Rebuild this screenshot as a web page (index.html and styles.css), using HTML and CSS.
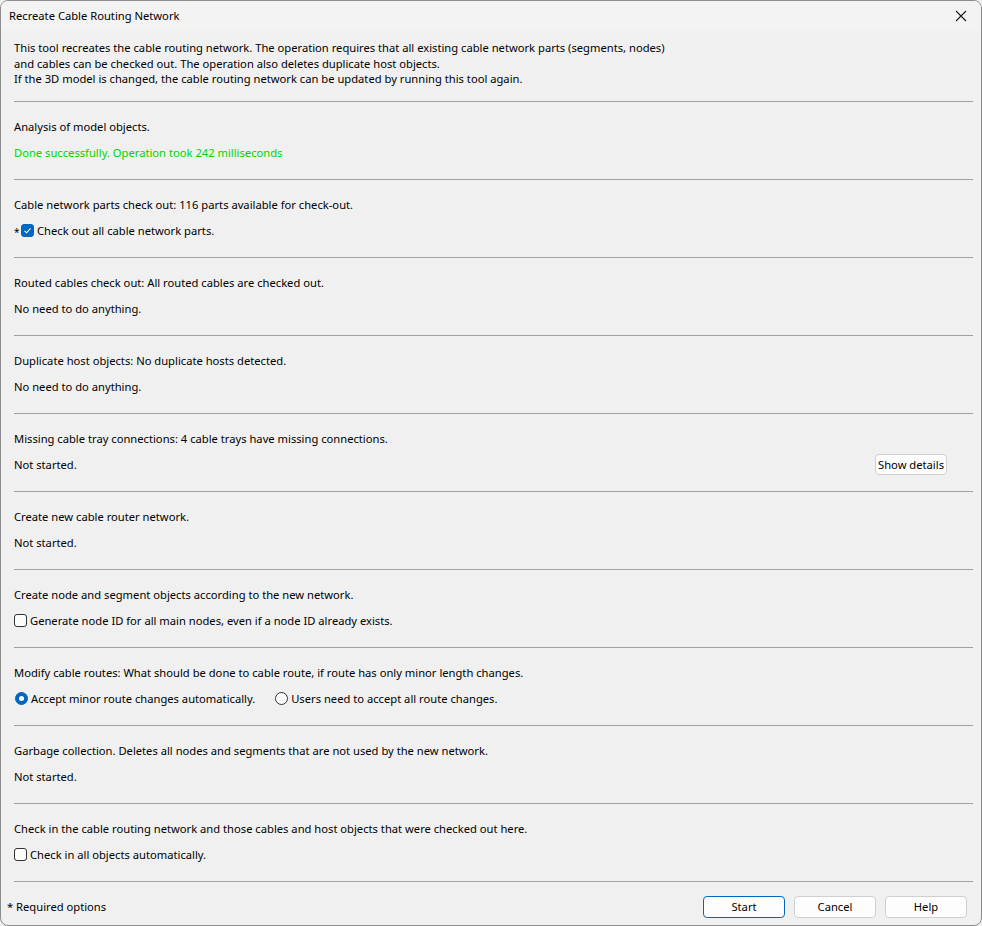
FILE: index.html
```html
<!DOCTYPE html>
<html>
<head>
<meta charset="utf-8">
<link rel="stylesheet" href="styles.css">
</head>
<body>
<div class="window">
  <div class="titlebar">
    <span class="title">Recreate Cable Routing Network</span>
    <svg class="close" width="12" height="12" viewBox="0 0 12 12"><path d="M1 1 L11 11 M11 1 L1 11" stroke="#1a1a1a" stroke-width="1.1" fill="none"/></svg>
  </div>
  <div class="content">
    <div class="intro">
      <div class="line">This tool recreates the cable routing network. The operation requires that all existing cable network parts (segments, nodes)</div>
      <div class="line">and cables can be checked out. The operation also deletes duplicate host objects.</div>
      <div class="line">If the 3D model is changed, the cable routing network can be updated by running this tool again.</div>
    </div>

    <div class="section">
      <div class="row">Analysis of model objects.</div>
      <div class="row green">Done successfully. Operation took 242 milliseconds</div>
    </div>

    <div class="section">
      <div class="row">Cable network parts check out: 116 parts available for check-out.</div>
      <div class="row"><span class="req">*</span><span class="cb checked"><svg width="9" height="9" viewBox="0 0 9 9"><path d="M1.5 4.8 L3.6 6.8 L7.6 2.4" stroke="#fff" stroke-width="1.1" fill="none"/></svg></span><span>Check out all cable network parts.</span></div>
    </div>

    <div class="section">
      <div class="row">Routed cables check out: All routed cables are checked out.</div>
      <div class="row">No need to do anything.</div>
    </div>

    <div class="section">
      <div class="row">Duplicate host objects: No duplicate hosts detected.</div>
      <div class="row">No need to do anything.</div>
    </div>

    <div class="section">
      <div class="row">Missing cable tray connections: 4 cable trays have missing connections.</div>
      <div class="row split"><span>Not started.</span><button class="btn small">Show details</button></div>
    </div>

    <div class="section">
      <div class="row">Create new cable router network.</div>
      <div class="row">Not started.</div>
    </div>

    <div class="section">
      <div class="row">Create node and segment objects according to the new network.</div>
      <div class="row"><span class="cb"></span><span>Generate node ID for all main nodes, even if a node ID already exists.</span></div>
    </div>

    <div class="section">
      <div class="row">Modify cable routes: What should be done to cable route, if route has only minor length changes.</div>
      <div class="row"><span class="rb on"></span><span class="rlabel">Accept minor route changes automatically.</span><span class="rb"></span><span>Users need to accept all route changes.</span></div>
    </div>

    <div class="section">
      <div class="row">Garbage collection. Deletes all nodes and segments that are not used by the new network.</div>
      <div class="row">Not started.</div>
    </div>

    <div class="section">
      <div class="row">Check in the cable routing network and those cables and host objects that were checked out here.</div>
      <div class="row"><span class="cb"></span><span>Check in all objects automatically.</span></div>
    </div>

    <div class="footer">
      <span class="note">* Required options</span>
      <div class="buttons">
        <button class="btn default">Start</button>
        <button class="btn">Cancel</button>
        <button class="btn">Help</button>
      </div>
    </div>
  </div>
</div>
</body>
</html>
```

FILE: styles.css
```css
html, body {
  margin: 0;
  padding: 0;
  background: #f0f0f0;
}
body {
  font-family: "Noto Sans", "Liberation Sans", sans-serif;
  font-size: 11.2px;
  color: #000;
}
.window {
  width: 982px;
  height: 926px;
  box-sizing: border-box;
  border: 1px solid #8c8c8c;
  border-radius: 8px;
  overflow: hidden;
  background: #f0f0f0;
}
.titlebar {
  height: 30px;
  background: #f3f3f3;
  display: flex;
  align-items: center;
  justify-content: space-between;
  padding: 0 14px 0 8px;
}
.title {
  font-size: 11.2px;
  line-height: 16px;
}
.close {
  display: block;
}
.content {
  padding: 0 8px 0 13px;
}
.intro {
  padding-top: 9px;
  padding-bottom: 14px;
  border-bottom: 1px solid #a0a0a0;
}
.line {
  line-height: 15.5px;
  white-space: nowrap;
}
.section {
  padding-top: 17px;
  padding-bottom: 18px;
  border-bottom: 1px solid #a0a0a0;
  display: flex;
  flex-direction: column;
  gap: 10px;
}
.row {
  height: 16px;
  line-height: 16px;
  display: flex;
  align-items: center;
  white-space: nowrap;
}
.row.split {
  justify-content: space-between;
  padding-right: 26px;
}
.green {
  color: #00d400;
}
.req {
  width: 7px;
  margin-left: 0;
  margin-top: 2px;
  font-size: 10px;
}
.cb {
  width: 11px;
  height: 11px;
  border: 1px solid #333;
  border-radius: 3px;
  background: #fdfdfd;
  margin-left: 0;
  margin-right: 3px;
  display: flex;
  align-items: center;
  justify-content: center;
  flex: none;
}
.cb.checked {
  background: #0067c0;
  border-color: #0067c0;
}
.cb svg {
  display: block;
}
.rb {
  width: 11px;
  height: 11px;
  border: 1px solid #333;
  border-radius: 50%;
  background: #fdfdfd;
  margin-left: 1px;
  margin-right: 3px;
  flex: none;
  box-sizing: content-box;
  position: relative;
}
.rb.on {
  background: #0067c0;
  border-color: #0067c0;
}
.rb.on::after {
  content: "";
  position: absolute;
  left: 3px;
  top: 3px;
  width: 5px;
  height: 5px;
  border-radius: 50%;
  background: #fff;
}
.rlabel {
  margin-right: 19px;
}
.btn {
  font-family: inherit;
  font-size: 11.2px;
  color: #000;
  background: #fdfdfd;
  border: 1px solid #d0d0d0;
  border-radius: 4px;
  height: 22px;
  width: 82px;
  padding: 0;
  line-height: 18px;
}
.btn.small {
  width: auto;
  height: 21px;
  padding: 0 2px;
}
.btn.default {
  border-color: #0067c0;
}
.footer {
  display: flex;
  justify-content: space-between;
  align-items: center;
  padding-top: 14px;
  padding-right: 6px;
}
.note {
  margin-left: -7px;
  line-height: 16px;
}
.buttons {
  display: flex;
  gap: 9px;
}
.buttons .btn:first-child {
  margin-right: 0;
}
```
